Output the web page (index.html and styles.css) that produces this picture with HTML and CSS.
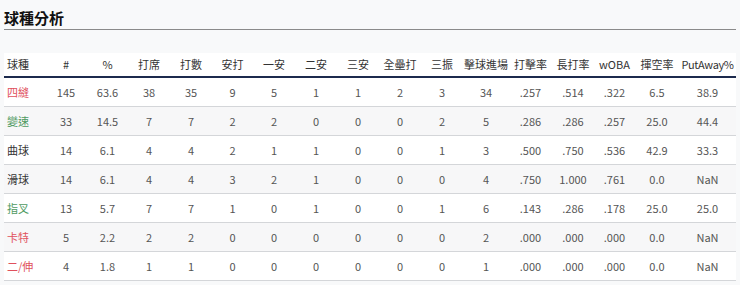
FILE: index.html
```html
<!DOCTYPE html>
<html lang="zh-Hant">
<head>
<meta charset="utf-8">
<link rel="stylesheet" href="styles.css">
</head>
<body>
<div class="page">
  <h2 class="title">球種分析</h2>
  <table class="stats">
    <colgroup>
      <col class="w41"><col class="w42"><col class="w41"><col class="w42"><col class="w42"><col class="w41"><col class="w42"><col class="w42"><col class="w42"><col class="w42"><col class="w42"><col class="w46"><col class="w43"><col class="w42"><col class="w41"><col class="w44"><col class="w57">
    </colgroup>
    <thead>
      <tr><th class="name">球種</th><th>#</th><th>%</th><th>打席</th><th>打數</th><th>安打</th><th>一安</th><th>二安</th><th>三安</th><th>全壘打</th><th>三振</th><th>擊球進場</th><th>打擊率</th><th>長打率</th><th>wOBA</th><th>揮空率</th><th class="tight">PutAway%</th></tr>
    </thead>
    <tbody>
      <tr><td class="name red">四縫</td><td>145</td><td>63.6</td><td>38</td><td>35</td><td>9</td><td>5</td><td>1</td><td>1</td><td>2</td><td>3</td><td>34</td><td>.257</td><td>.514</td><td>.322</td><td>6.5</td><td>38.9</td></tr>
      <tr><td class="name green">變速</td><td>33</td><td>14.5</td><td>7</td><td>7</td><td>2</td><td>2</td><td>0</td><td>0</td><td>0</td><td>2</td><td>5</td><td>.286</td><td>.286</td><td>.257</td><td>25.0</td><td>44.4</td></tr>
      <tr><td class="name dark">曲球</td><td>14</td><td>6.1</td><td>4</td><td>4</td><td>2</td><td>1</td><td>1</td><td>0</td><td>0</td><td>1</td><td>3</td><td>.500</td><td>.750</td><td>.536</td><td>42.9</td><td>33.3</td></tr>
      <tr><td class="name dark">滑球</td><td>14</td><td>6.1</td><td>4</td><td>4</td><td>3</td><td>2</td><td>1</td><td>0</td><td>0</td><td>0</td><td>4</td><td>.750</td><td>1.000</td><td>.761</td><td>0.0</td><td>NaN</td></tr>
      <tr><td class="name green">指叉</td><td>13</td><td>5.7</td><td>7</td><td>7</td><td>1</td><td>0</td><td>1</td><td>0</td><td>0</td><td>1</td><td>6</td><td>.143</td><td>.286</td><td>.178</td><td>25.0</td><td>25.0</td></tr>
      <tr><td class="name red">卡特</td><td>5</td><td>2.2</td><td>2</td><td>2</td><td>0</td><td>0</td><td>0</td><td>0</td><td>0</td><td>0</td><td>2</td><td>.000</td><td>.000</td><td>.000</td><td>0.0</td><td>NaN</td></tr>
      <tr><td class="name red">二/伸</td><td>4</td><td>1.8</td><td>1</td><td>1</td><td>0</td><td>0</td><td>0</td><td>0</td><td>0</td><td>0</td><td>1</td><td>.000</td><td>.000</td><td>.000</td><td>0.0</td><td>NaN</td></tr>
    </tbody>
  </table>
</div>
</body>
</html>
```
FILE: styles.css
```css
html, body {
  margin: 0;
  padding: 0;
  background: #f8f9fa;
}
body {
  font-family: "Noto Sans CJK TC", sans-serif;
  color: #555;
}
.page {
  padding: 0 4px;
}
.title {
  margin: 0;
  padding-top: 8px;
  height: 21px;
  font-size: 15px;
  line-height: 20px;
  font-weight: 700;
  color: #111;
  border-bottom: 1px solid #8a8a8a;
}
.stats {
  margin-top: 23px;
  width: 732px;
  table-layout: fixed;
  border-collapse: collapse;
  font-size: 11px;
}
.w41 { width: 41px; }
.w42 { width: 42px; }
.w43 { width: 43px; }
.w44 { width: 44px; }
.w46 { width: 46px; }
.w57 { width: 57px; }
.stats th {
  background: #fff;
  color: #333;
  font-weight: 400;
  height: 21px;
  padding: 0 0 2px;
  text-align: center;
  white-space: nowrap;
  border-bottom: 2px solid #1c2a4d;
}
.stats th.tight {
  letter-spacing: -0.4px;
}
.stats td {
  height: 28px;
  padding: 0;
  text-align: center;
  white-space: nowrap;
  border-bottom: 1px solid #d4d6d9;
}
.stats tbody tr:nth-child(odd) td { background: #fff; }
.stats tbody tr:nth-child(even) td { background: #f7f7f8; }
.stats .name {
  text-align: left;
  padding-left: 3px;
}
.red { color: #e0505c; }
.green { color: #4f9a62; }
.dark { color: #333; }
```
